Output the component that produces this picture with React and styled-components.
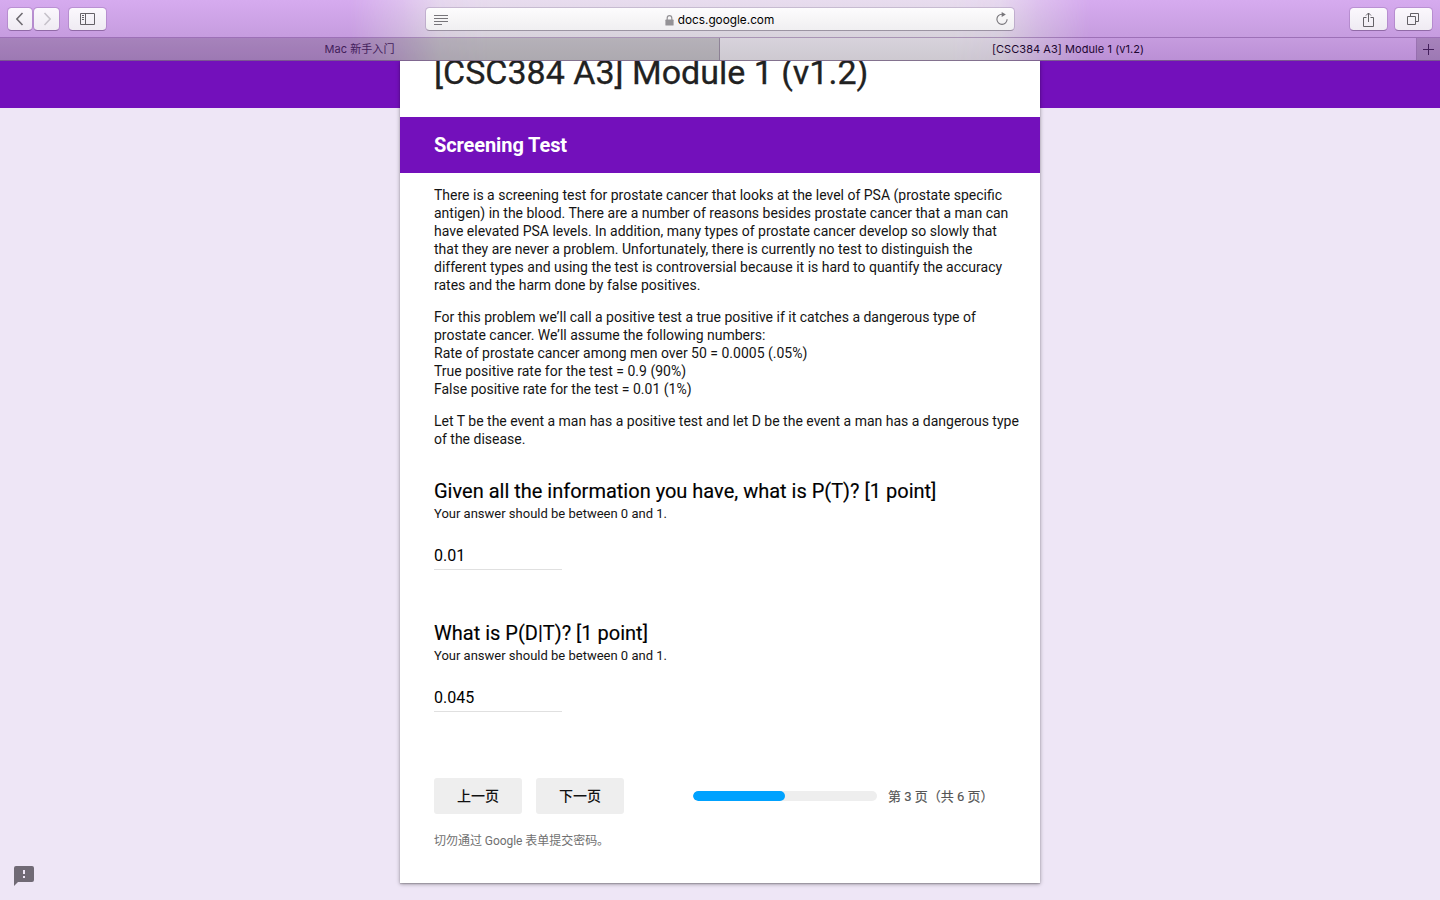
import React from "react";
import styled, { createGlobalStyle } from "styled-components";

const GlobalStyle = createGlobalStyle`
  *, *::before, *::after { box-sizing: border-box; }
  body { margin: 0; overflow: hidden; }
  p, h1, h2, h3 { margin: 0; }
`;

const Window = styled.div`
  height: 900px;
  display: flex;
  flex-direction: column;
  overflow: hidden;
  font-family: Roboto, "Noto Sans CJK SC", sans-serif;
`;

const Chrome = styled.header`
  flex: none;
  height: 61px;
  display: flex;
  flex-direction: column;
  position: relative;
  z-index: 1;
  isolation: isolate;
  background: linear-gradient(#d6abef, #c69cdf 37px, #ba8fd5);
  font-family: Inter, "Noto Sans CJK SC", sans-serif;

  &::before {
    content: "";
    position: absolute;
    inset: 0;
    z-index: -1;
    background: linear-gradient(#e8dcef, #d8d3dc 37px, #cdc9d0);
    mask-image: linear-gradient(90deg, transparent 350px, rgba(0, 0, 0, 0.45) 401px, rgba(0, 0, 0, 0.9) 440px, #000 490px, #000 950px, rgba(0, 0, 0, 0.9) 1000px, rgba(0, 0, 0, 0.45) 1039px, transparent 1090px);
  }
`;

const Toolbar = styled.div`
  height: 37px;
  display: grid;
  grid-template-columns: 1fr 590px 1fr;
  align-items: start;
  padding: 7px 7px 0;
`;

const Tools = styled.div`
  display: flex;
  gap: ${(p) => p.$gap}px;
  justify-content: ${(p) => (p.$end ? "flex-end" : "flex-start")};
`;

const ToolButton = styled.button`
  width: ${(p) => p.$width}px;
  height: 24px;
  padding: 0;
  border: 1px solid rgba(130, 90, 155, 0.3);
  border-bottom-color: rgba(90, 55, 110, 0.5);
  border-radius: 4.5px;
  background: linear-gradient(#fbf8fd, #efebf2);
  background-clip: padding-box;
  display: flex;
  align-items: center;
  justify-content: center;
`;

const AddressBar = styled.div`
  height: 24px;
  border: 1px solid rgba(100, 80, 120, 0.22);
  border-bottom-color: rgba(70, 60, 80, 0.42);
  border-radius: 4.5px;
  background: linear-gradient(#fdfcfd, #f0eff1);
  background-clip: padding-box;
  display: grid;
  grid-template-columns: 22px 1fr 24px;
  align-items: center;
  padding: 0 6px 0 8px;

  svg { display: block; }
`;

const Address = styled.div`
  display: flex;
  align-items: center;
  justify-content: center;
  gap: 4px;
  font-size: 11.8px;
  line-height: 22px;
  padding: 1px 1px 0 0;
  color: #000;
`;

const Reload = styled.div`
  display: flex;
  justify-content: flex-end;
  padding-bottom: 2px;
`;

const Tabs = styled.div`
  height: 24px;
  display: grid;
  grid-template-columns: 720px 1fr 23px;
  border-top: 1px solid rgba(80, 30, 110, 0.35);
  border-bottom: 1px solid rgba(60, 30, 80, 0.5);
`;

const Tab = styled.div`
  display: flex;
  align-items: center;
  justify-content: center;
  font-size: 11px;
  letter-spacing: 0.06px;
  font-weight: 400;
  line-height: 22px;
  color: ${(p) => (p.$active ? "#1c0630" : "#43205b")};
  background: ${(p) => (p.$active ? "transparent" : "rgba(0, 0, 0, 0.155)")};
  border-right: ${(p) => (p.$divider ? "1px solid rgba(60, 30, 80, 0.3)" : "0")};
`;

const Page = styled.main`
  flex: 1;
  min-height: 0;
  position: relative;
  display: flex;
  justify-content: center;
  align-items: flex-start;
  background: linear-gradient(#7310bb 47px, #eee6f6 47px);
`;

const Card = styled.article`
  width: 640px;
  height: 822px;
  background: #fff;
  box-shadow: 0 1px 4px rgba(0, 0, 0, 0.37), 0 1px 1px rgba(0, 0, 0, 0.15);
`;

const Title = styled.h1`
  height: 56px;
  padding-left: 34px;
  font-size: 34px;
  font-weight: 400;
  line-height: 22px;
  color: #212121;
  -webkit-text-stroke: 0.3px #212121;
  white-space: nowrap;
`;

const SectionTitle = styled.h2`
  height: 56px;
  padding-left: 34px;
  background: #7310bb;
  color: #fff;
  font-size: 20px;
  font-weight: 700;
  line-height: 56px;
  letter-spacing: -0.1px;
`;

const Content = styled.div`
  padding: 13px 0 0 34px;
`;

const Paragraph = styled.p`
  margin-bottom: 14px;
  font-size: 14px;
  line-height: 18px;
  color: #141414;
  white-space: pre;
`;

const Question = styled.section`
  height: 142px;
  padding-top: 17px;
`;

const QuestionTitle = styled.h3`
  font-size: 20px;
  font-weight: 400;
  line-height: 24px;
  color: #000;
  -webkit-text-stroke: 0.15px #000;
  white-space: nowrap;
`;

const Hint = styled.p`
  font-size: 13px;
  line-height: 18px;
  margin-top: 2px;
  color: #141414;
`;

const Answer = styled.input`
  display: block;
  width: 128px;
  height: 26px;
  margin-top: 21px;
  padding: 0 0 2px;
  border: 0;
  border-bottom: 1px solid #e0e0e0;
  outline: 0;
  background: transparent;
  font: 400 16px/24px Roboto, sans-serif;
  color: #000;
`;

const Actions = styled.div`
  display: flex;
  align-items: center;
  margin-top: 32px;
`;

const PageButton = styled.button`
  width: 88px;
  height: 36px;
  margin-right: 14px;
  padding: 0 0 2px;
  border: 0;
  border-radius: 3px;
  background: #eee;
  color: #111;
  font: 500 14px/34px "Noto Sans CJK SC", sans-serif;
`;

const Track = styled.div`
  width: 184px;
  height: 10px;
  margin-left: 55px;
  border-radius: 5px;
  background: #eee;
  overflow: hidden;
`;

const Progress = styled.div`
  height: 100%;
  border-radius: 5px;
  background: #00a2ff;
`;

const PageCount = styled.span`
  margin-left: 11px;
  padding-top: 2px;
  font-size: 13px;
  line-height: 20px;
  color: #555;
  -webkit-text-stroke: 0.15px #555;
  white-space: nowrap;
`;

const Notice = styled.p`
  margin-top: 17px;
  font-size: 12px;
  line-height: 20px;
  letter-spacing: -0.04px;
  color: #707070;
`;

const Feedback = styled.button`
  position: absolute;
  left: 14px;
  bottom: 14px;
  width: 20px;
  height: 20px;
  padding: 0;
  border: 0;
  background: none;

  svg { display: block; }
`;

const questions = [
  { title: "Given all the information you have, what is P(T)? [1 point]", value: "0.01" },
  { title: "What is P(D|T)? [1 point]", value: "0.045" },
];

const paragraphs = [
  `There is a screening test for prostate cancer that looks at the level of PSA (prostate specific
antigen) in the blood. There are a number of reasons besides prostate cancer that a man can
have elevated PSA levels. In addition, many types of prostate cancer develop so slowly that
that they are never a problem. Unfortunately, there is currently no test to distinguish the
different types and using the test is controversial because it is hard to quantify the accuracy
rates and the harm done by false positives.`,
  `For this problem we’ll call a positive test a true positive if it catches a dangerous type of
prostate cancer. We’ll assume the following numbers:
Rate of prostate cancer among men over 50 = 0.0005 (.05%)
True positive rate for the test = 0.9 (90%)
False positive rate for the test = 0.01 (1%)`,
  `Let T be the event a man has a positive test and let D be the event a man has a dangerous type
of the disease.`,
];

export default function App() {
  return (
    <Window>
      <GlobalStyle />
      <Chrome>
        <Toolbar>
          <Tools $gap={8}>
            <Tools $gap={0}>
              <ToolButton $width={26}>
                <svg width="8" height="14" viewBox="0 0 8 14" fill="none" stroke="#6d6a70" strokeWidth="1.5"><path d="M6.5 1 .9 7l5.6 6" /></svg>
              </ToolButton>
              <ToolButton $width={27}>
                <svg width="8" height="14" viewBox="0 0 8 14" fill="none" stroke="#c6c2ca" strokeWidth="1.5"><path d="m1.5 1 5.6 6-5.6 6" /></svg>
              </ToolButton>
            </Tools>
            <ToolButton $width={39}>
              <svg width="15" height="12" viewBox="0 0 15 12" fill="none" stroke="#646167"><path d="M.5.5h14v11H.5zM5.5.5v11M2 2.5h2M2 4.5h2M2 6.5h2" /></svg>
            </ToolButton>
          </Tools>
          <AddressBar>
            <svg width="14" height="10" viewBox="0 0 14 10" stroke="#77757a"><path d="M0 .5h14M0 3.5h14M0 6.5h14M0 9.5h8" /></svg>
            <Address>
              <svg width="9" height="11" viewBox="0 0 9 11"><path d="M2.2 5V3a2.3 2.3 0 0 1 4.6 0v2" fill="none" stroke="#949296" strokeWidth="1.2" /><rect x=".4" y="4.6" width="8.2" height="6" rx=".7" fill="#949296" /></svg>
              docs.google.com
            </Address>
            <Reload>
              <svg width="12" height="13" viewBox="0 0 12 13" fill="none" stroke="#77757a" strokeWidth="1.1"><path d="M6 2.2a5.1 5.1 0 1 0 5.1 5.1" /><path d="M5.7 0 9.8 2.6 5.7 5z" fill="#77757a" stroke="none" /></svg>
            </Reload>
          </AddressBar>
          <Tools $gap={6} $end>
            <ToolButton $width={39}>
              <svg width="11" height="15" viewBox="0 0 11 15" fill="none" stroke="#646167"><path d="M3.5 5.5h-3v9h10v-9h-3M5.5 10V1M3 3.5 5.5 1 8 3.5" /></svg>
            </ToolButton>
            <ToolButton $width={39}>
              <svg width="13" height="12" viewBox="0 0 13 12" fill="none" stroke="#646167"><path d="M.5 3.5h8v8h-8zM3.5 3V.5h8v8H9" /></svg>
            </ToolButton>
          </Tools>
        </Toolbar>
        <Tabs>
          <Tab $divider>Mac 新手入门</Tab>
          <Tab $active $divider>[CSC384 A3] Module 1 (v1.2)</Tab>
          <Tab>
            <svg width="11" height="11" viewBox="0 0 11 11" stroke="#43205b"><path d="M0 5.5h11M5.5 0v11" /></svg>
          </Tab>
        </Tabs>
      </Chrome>
      <Page>
        <Card>
          <Title>[CSC384 A3] Module 1 (v1.2)</Title>
          <SectionTitle>Screening Test</SectionTitle>
          <Content>
            {paragraphs.map((text) => <Paragraph key={text}>{text}</Paragraph>)}
            {questions.map((q) => (
              <Question key={q.title}>
                <QuestionTitle>{q.title}</QuestionTitle>
                <Hint>Your answer should be between 0 and 1.</Hint>
                <Answer defaultValue={q.value} />
              </Question>
            ))}
            <Actions>
              <PageButton>上一页</PageButton>
              <PageButton>下一页</PageButton>
              <Track><Progress style={{ width: `${(3 / 6) * 100}%` }} /></Track>
              <PageCount>第 3 页（共 6 页）</PageCount>
            </Actions>
            <Notice>切勿通过 Google 表单提交密码。</Notice>
          </Content>
        </Card>
        <Feedback aria-label="Feedback">
          <svg width="20" height="20" viewBox="0 0 20 20"><path fill="#706a75" fillRule="evenodd" d="M2 0h16a2 2 0 0 1 2 2v12a2 2 0 0 1-2 2H4l-4 4V2a2 2 0 0 1 2-2zM9 4v4h2V4zM9 10v2h2v-2z" /></svg>
        </Feedback>
      </Page>
    </Window>
  );
}
